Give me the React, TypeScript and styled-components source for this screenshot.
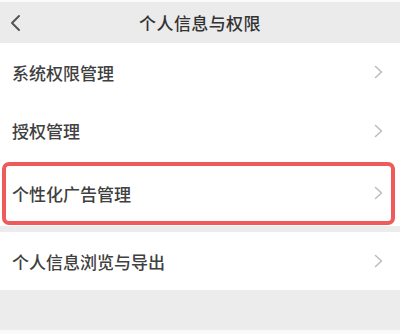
import React from "react";
import styled, { createGlobalStyle } from "styled-components";

type Item = { label: string; height: number; highlighted?: boolean };

const groups: Item[][] = [
  [
    { label: "系统权限管理", height: 58 },
    { label: "授权管理", height: 59 },
    { label: "个性化广告管理", height: 66, highlighted: true },
  ],
  [{ label: "个人信息浏览与导出", height: 58 }],
];

const GlobalStyle = createGlobalStyle`
  body {
    margin: 0;
    background: #fafafa;
    font-family: "Noto Sans CJK SC", "Noto Sans", sans-serif;
  }
`;

const Page = styled.div`
  display: flex;
  flex-direction: column;
  height: 328px;
  padding-top: 2px;
  border-bottom: 4px solid #fafafa;
  background: linear-gradient(#fafafa 0 2px, #ececec 2px);
`;

const Header = styled.header`
  display: grid;
  grid-template-columns: 40px 1fr 40px;
  align-items: center;
  height: 41px;
  background: #ebebeb;
`;

const Back = styled.button`
  display: flex;
  align-items: center;
  padding: 0 0 0 9px;
  border: 0;
  background: none;
`;

const Title = styled.h1`
  margin: 0;
  text-align: center;
  font-size: 17px;
  font-weight: 500;
  letter-spacing: 0.4px;
  color: #333;
`;

const Group = styled.ul`
  margin: 0 0 6px;
  padding: 0;
  list-style: none;
  background: #fff;
`;

const Row = styled.li<{ $height: number; $highlighted?: boolean }>`
  position: relative;
  display: flex;
  align-items: center;
  justify-content: space-between;
  height: ${({ $height }) => $height}px;
  padding: 0 17px 0 12px;
  box-sizing: border-box;

  & + &::before {
    content: "";
    position: absolute;
    top: 0;
    left: 12px;
    right: 0;
    height: 1px;
    background: #efefef;
  }

  &::after {
    content: "";
    display: ${({ $highlighted }) => ($highlighted ? "block" : "none")};
    position: absolute;
    top: 2px;
    bottom: 1px;
    left: 2px;
    right: 5px;
    border: 4px solid #ef5a5a;
    border-radius: 7px;
  }
`;

const Label = styled.span`
  font-size: 17px;
  font-weight: 500;
  color: #404040;
`;

const Chevron = () => (
  <svg width="9" height="14" viewBox="0 0 9 14" fill="none">
    <polyline points="1.5,1.5 7.5,7 1.5,12.5" stroke="#bdbdbd" strokeWidth="1.6" strokeLinecap="round" strokeLinejoin="round" />
  </svg>
);

export default function App() {
  return (
    <>
      <GlobalStyle />
      <Page>
        <Header>
          <Back aria-label="返回">
            <svg width="12" height="18" viewBox="0 0 12 18" fill="none">
              <polyline points="10,2 3,9 10,16" stroke="#555" strokeWidth="2" strokeLinecap="round" strokeLinejoin="round" />
            </svg>
          </Back>
          <Title>个人信息与权限</Title>
          <span />
        </Header>
        {groups.map((items, i) => (
          <Group key={i}>
            {items.map(item => (
              <Row key={item.label} $height={item.height} $highlighted={item.highlighted}>
                <Label>{item.label}</Label>
                <Chevron />
              </Row>
            ))}
          </Group>
        ))}
      </Page>
    </>
  );
}
